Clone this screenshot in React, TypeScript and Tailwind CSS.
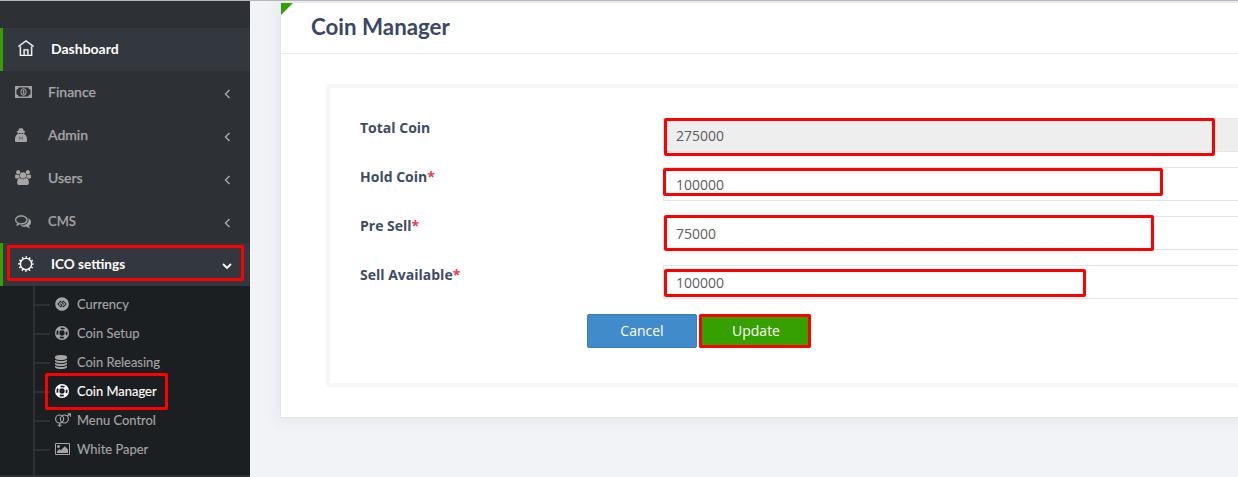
import React from "react";
import { FaGgCircle } from "react-icons/fa";
import { TfiHome } from "react-icons/tfi";

type IconProps = { className?: string };

const MoneyIcon = ({ className }: IconProps) => (
  <svg viewBox="0 0 17 12" className={className} fill="none" stroke="currentColor">
    <rect x="0.75" y="0.75" width="15.5" height="10.5" strokeWidth="1.4" />
    <path d="M1 1h2.500a2.500 2.500 0 0 1-2.500 2.500zM16 1h-2.500a2.500 2.500 0 0 0 2.500 2.500zM1 11h2.500a2.500 2.500 0 0 0-2.500-2.500zM16 11h-2.500a2.500 2.500 0 0 1 2.500-2.500z" fill="currentColor" strokeWidth="0.3" />
    <ellipse cx="8.5" cy="6" rx="2.6" ry="3.4" strokeWidth="1" />
    <path d="M7.6 4.8l1.1-.8v3.8M7.4 7.9h2.4" strokeWidth="1" />
  </svg>
);

const SecretIcon = ({ className }: IconProps) => (
  <svg viewBox="0 0 12 14" className={className} fill="currentColor">
    <path d="M3.300 2.700L4.100.5Q4.500-.1 5.200.3L6 .6l.8-.3q.7-.4 1.100.2l.8 2.200 1.600.8q.4.4-.3.7l-.8.3v1.600q1.100.6 1.700 1.400 1.100 1.400 1.100 3.500V13q0 1-1 1H1q-1 0-1-1v-2Q0 8.900 1.100 7.500q.6-.8 1.700-1.400V4.500L2 4.200q-.7-.3-.3-.7z" />
    <path d="M3.700 5h1.800v.9h-1.800zM6.500 5h1.800v.9h-1.800zM4.500 8.500l1 1-.7 3zM7.500 8.500l-1 1 .7 3z" fill="#2d3135" />
  </svg>
);

const UsersIcon = ({ className }: IconProps) => (
  <svg viewBox="0 0 1920 1792" className={className} fill="currentColor">
    <path d="M593 896q-162 5-265 128h-134q-82 0-138-40.5t-56-118.5q0-353 124-353 6 0 43.5 21t97.5 42.5 119 21.5q67 0 133-23-5 37-5 66 0 139 81 256zm1071 637q0 120-73 189.5t-194 69.5h-874q-121 0-194-69.5t-73-189.5q0-53 3.5-103.5t14-109 26.5-108.5 43-97.5 62-81 85.5-53.5 111.5-20q10 0 43 21.5t73 48 107 48 135 21.5 135-21.5 107-48 73-48 43-21.5q61 0 111.5 20t85.5 53.5 62 81 43 97.5 26.5 108.5 14 109 3.5 103.5zm-1024-1277q0 106-75 181t-181 75-181-75-75-181 75-181 181-75 181 75 75 181zm704 384q0 159-112.5 271.5t-271.5 112.5-271.5-112.5-112.5-271.5 112.5-271.5 271.5-112.5 271.5 112.5 112.5 271.5zm576 225q0 78-56 118.5t-138 40.5h-134q-103-123-265-128 81-117 81-256 0-29-5-66 66 23 133 23 59 0 119-21.5t97.5-42.5 43.5-21q124 0 124 353zm-128-609q0 106-75 181t-181 75-181-75-75-181 75-181 181-75 181 75 75 181z" />
  </svg>
);

const CommentsIcon = ({ className }: IconProps) => (
  <svg viewBox="0 0 1792 1792" className={className} fill="currentColor" stroke="currentColor" strokeWidth="30">
    <path d="M704 384q-153 0-286 52t-211.5 141-78.5 191q0 82 53 158t149 132l97 56-35 84q34-20 62-39l44-31 53 10q78 14 153 14 153 0 286-52t211.5-141 78.5-191-78.5-191-211.5-141-286-52zm0-128q191 0 353.5 68.5t256.5 186.5 94 257-94 257-256.5 186.5-353.5 68.5q-86 0-176-16-124 88-278 128-36 9-86 16h-3q-11 0-20.5-8t-11.5-21q-1-3-1-6.5t.5-6.5 2-6l2.5-5 3.5-5.5 4-5 4.5-5 4-4.5q5-6 23-25t26-29.5 22.5-29 25-38.5 20.5-44q-124-72-195-177t-71-224q0-139 94-257t256.5-186.5 353.5-68.5zm822 1169q10 24 20.5 44t25 38.5 22.5 29 26 29.5 23 25q1 1 4 4.5t4.5 5 4 5 3.5 5.5l2.5 5 2 6 .5 6.5-1 6.5q-3 14-13 22t-22 7q-50-7-86-16-154-40-278-128-90 16-176 16-271 0-472-132 58 4 88 4 161 0 309-45t264-129q125-92 192-212t67-254q0-77-23-152 129 71 204 178t75 230q0 120-71 224.500t-195 176.500z" />
  </svg>
);

const GearIcon = ({ className }: IconProps) => (
  <svg viewBox="0 0 16 16" className={className} fill="none" stroke="currentColor">
    <circle cx="8" cy="8" r="5.6" strokeWidth="1.4" />
    <circle cx="8" cy="8" r="6.9" strokeWidth="1.7" strokeDasharray="1.5 2.113" strokeDashoffset="0.75" />
  </svg>
);

const RingIcon = ({ className }: IconProps) => (
  <svg viewBox="0 0 14 14" className={className} fill="none" stroke="currentColor">
    <circle cx="7" cy="7" r="6.3" strokeWidth="1.4" />
    <circle cx="7" cy="7" r="3.2" strokeWidth="1.1" />
    <circle cx="7" cy="7" r="4.9" strokeWidth="3" strokeDasharray="3.4 4.297" strokeDashoffset="-2.15" />
  </svg>
);

const DatabaseIcon = ({ className }: IconProps) => (
  <svg viewBox="0 0 1536 1792" className={className} preserveAspectRatio="none" fill="currentColor">
    <path d="M768 768q237 0 443-43t325-127v170q0 69-103 128t-280 93.5-385 34.5-385-34.5-280-93.5-103-128v-170q119 84 325 127t443 43zm0 768q237 0 443-43t325-127v170q0 69-103 128t-280 93.5-385 34.5-385-34.5-280-93.5-103-128v-170q119 84 325 127t443 43zm0-384q237 0 443-43t325-127v170q0 69-103 128t-280 93.5-385 34.5-385-34.5-280-93.5-103-128v-170q119 84 325 127t443 43zm0-1152q208 0 385 34.5t280 93.5 103 128v128q0 69-103 128t-280 93.5-385 34.5-385-34.5-280-93.5-103-128v-128q0-69 103-128t280-93.5 385-34.5z" />
  </svg>
);

const VenusMarsIcon = ({ className }: IconProps) => (
  <svg viewBox="0 0 16 14" className={className} fill="none" stroke="currentColor" strokeWidth="1.15">
    <circle cx="4.6" cy="6" r="4" />
    <circle cx="9.4" cy="6" r="4" />
    <path d="M4.6 10V14M2.6 12.200h4M12.200 3.200L15.300.8M12.600.7h2.900v3" />
  </svg>
);

const PictureIcon = ({ className }: IconProps) => (
  <svg viewBox="-64 128 1920 1536" className={className} fill="currentColor">
    <path d="M576 576q0 80-56 136t-136 56-136-56-56-136 56-136 136-56 136 56 56 136zm1024 384v448h-1408v-192l320-320 160 160 512-512zm96-704h-1600q-13 0-22.5 9.5t-9.5 22.5v1216q0 13 9.5 22.5t22.5 9.5h1600q13 0 22.5-9.5t9.5-22.5v-1216q0-13-9.5-22.5t-22.5-9.5zm160 32v1216q0 66-47 113t-113 47h-1600q-66 0-113-47t-47-113v-1216q0-66 47-113t113-47h1600q66 0 113 47t47 113z" />
  </svg>
);

const Chevron = ({ open }: { open?: boolean }) => (
  <svg viewBox="0 0 10 10" className="mt-[3px] mr-[18px] size-[10px]" fill="none" stroke="currentColor" strokeWidth={open ? 1.8 : 1.5}>
    <path d={open ? "M1 3l4 4 4-4" : "M7.500 1L3.500 5l4 4"} />
  </svg>
);

const menu = [
  { label: "Finance", icon: <MoneyIcon className="h-[12px] w-[17px]" />, text: "" },
  { label: "Admin", icon: <SecretIcon className="h-[14px] w-[12px]" />, text: "" },
  { label: "Users", icon: <UsersIcon className="h-[15px] w-[16px]" />, text: "" },
  { label: "CMS", icon: <CommentsIcon className="h-[16px] w-[16px]" />, text: "scale-x-[.93]" },
];

const submenu = [
  { label: "Currency", icon: <FaGgCircle className="size-[14px]" /> },
  { label: "Coin Setup", icon: <RingIcon className="size-[14px]" /> },
  { label: "Coin Releasing", icon: <DatabaseIcon className="h-[14px] w-[12px]" /> },
  { label: "Coin Manager", icon: <RingIcon className="size-[14px]" />, active: true },
  { label: "Menu Control", icon: <VenusMarsIcon className="h-[14px] w-[16px]" /> },
  { label: "White Paper", icon: <PictureIcon className="h-[12px] w-[15px]" /> },
];

const fields = [
  { label: "Total Coin", value: "275000", disabled: true },
  { label: "Hold Coin", value: "100000", required: true },
  { label: "Pre Sell", value: "75000", required: true },
  { label: "Sell Available", value: "100000", required: true },
];

const Mark = ({ className }: IconProps) => (
  <div className={`pointer-events-none absolute rounded-[2px] border-[3px] border-[#ff0000] ${className}`} />
);

export default function App() {
  return (
    <div className="relative flex h-[477px] w-[1238px] flex-col overflow-hidden bg-[#f1f3f7]">
      <div className="h-px shrink-0 bg-[#b9b6b9]" />
      <div className="flex min-h-0 flex-1">
        <aside className="w-[250px] shrink-0 bg-[#2d3135] pt-[27px] font-[Lato,sans-serif] text-[14px] text-[#a5a5a5]">
          <div className="flex h-[43px] items-center border-l-[3px] border-[#36a000] bg-[#33373e] pl-[15px] font-bold text-white">
            <TfiHome className="mb-[3px] size-[16px]" stroke="currentColor" strokeWidth={0.5} />
            <span className="ml-[17px] pb-[2px]">Dashboard</span>
          </div>
          {menu.map((item) => (
            <div key={item.label} className="flex h-[43px] items-center pl-[15px]">
              <span className="flex w-[33px] items-center pb-[2px]">{item.icon}</span>
              <span className={`flex-1 origin-left pb-[2px] font-medium [-webkit-text-stroke:0.25px] ${item.text}`}>{item.label}</span>
              <Chevron />
            </div>
          ))}
          <div className="flex h-[43px] items-center border-l-[3px] border-[#36a000] bg-[#33373e] pl-[15px] font-bold text-white">
            <GearIcon className="mb-px size-[16px]" />
            <span className="ml-[17px] flex-1 origin-left scale-x-[.97] pb-[2px]">ICO settings</span>
            <Chevron open />
          </div>
          <div className="flex h-[189px] bg-[#1c1f21] pl-[33px]">
            <div className="flex-1 border-l-2 border-[#2d3135] pt-[4px]">
              {submenu.map((item) => (
                <div key={item.label} className={`flex h-[29px] items-center ${item.active ? "text-white" : ""}`}>
                  <span className="h-[2px] w-[15px] bg-[#2d3135]" />
                  <span className="ml-[5px] flex w-[22px] items-center pb-[2px]">{item.icon}</span>
                  <span className="origin-left scale-x-[.925] pb-[2px] [-webkit-text-stroke:0.15px]">{item.label}</span>
                </div>
              ))}
            </div>
          </div>
        </aside>
        <main className="min-w-0 flex-1 overflow-hidden pt-px pl-[30px] font-['Open_Sans',sans-serif]">
          <section className="h-[416px] w-[1000px] border border-[#e3e6f0] bg-white shadow-[0_1px_15px_1px_rgba(69,65,78,0.08)]">
            <header className="flex h-[51px] border-b border-[#ebedf2]">
              <svg viewBox="0 0 12 12" className="size-[12px] shrink-0">
                <path d="M0 0h12L0 12z" fill="#36a000" />
              </svg>
              <h1 className="ml-[18px] origin-left scale-x-[.97] pt-[8px] font-[Lato,sans-serif] text-[23px] leading-[30px] font-bold text-[#3a4765]">Coin Manager</h1>
            </header>
            <div className="mt-[30px] ml-[45px] h-[303px] w-[1000px] border-4 border-[#f7f7fa] pt-[30px] pl-[30px]">
              {fields.map((f) => (
                <div key={f.label} className="mb-[15px] flex h-[34px]">
                  <label className="w-[303px] text-[14px] leading-[20px] font-bold text-[#3f4b66]">
                    {f.label}
                    {f.required && <span className="text-[#f4364c]">*</span>}
                  </label>
                  <div className={`flex-1 border border-[#e3e4e6] pl-[12px] text-[14px] leading-[34px] text-[#5c5c5c] ${f.disabled ? "bg-[#eee]" : "bg-white"}`}>{f.value}</div>
                </div>
              ))}
              <div className="ml-[227px] flex gap-[2px] text-[14px] text-white">
                <button className="h-[34px] w-[110px] rounded-[2px] border border-[#357ebd] bg-[#428bca] pb-[2px]">Cancel</button>
                <button className="h-[34px] w-[112px] rounded-[2px] border border-[#2f8d00] bg-[#36a000] pb-[2px] pl-[2px]">Update</button>
              </div>
            </div>
          </section>
        </main>
      </div>
      <Mark className="top-[245px] left-[7px] h-[36px] w-[237px]" />
      <Mark className="top-[373px] left-[45px] h-[37px] w-[123px]" />
      <Mark className="top-[118px] left-[664px] h-[38px] w-[551px]" />
      <Mark className="top-[168px] left-[663px] h-[28px] w-[500px]" />
      <Mark className="top-[215px] left-[664px] h-[36px] w-[490px]" />
      <Mark className="top-[269px] left-[664px] h-[28px] w-[422px]" />
      <Mark className="top-[314px] left-[699px] h-[34px] w-[112px]" />
    </div>
  );
}
